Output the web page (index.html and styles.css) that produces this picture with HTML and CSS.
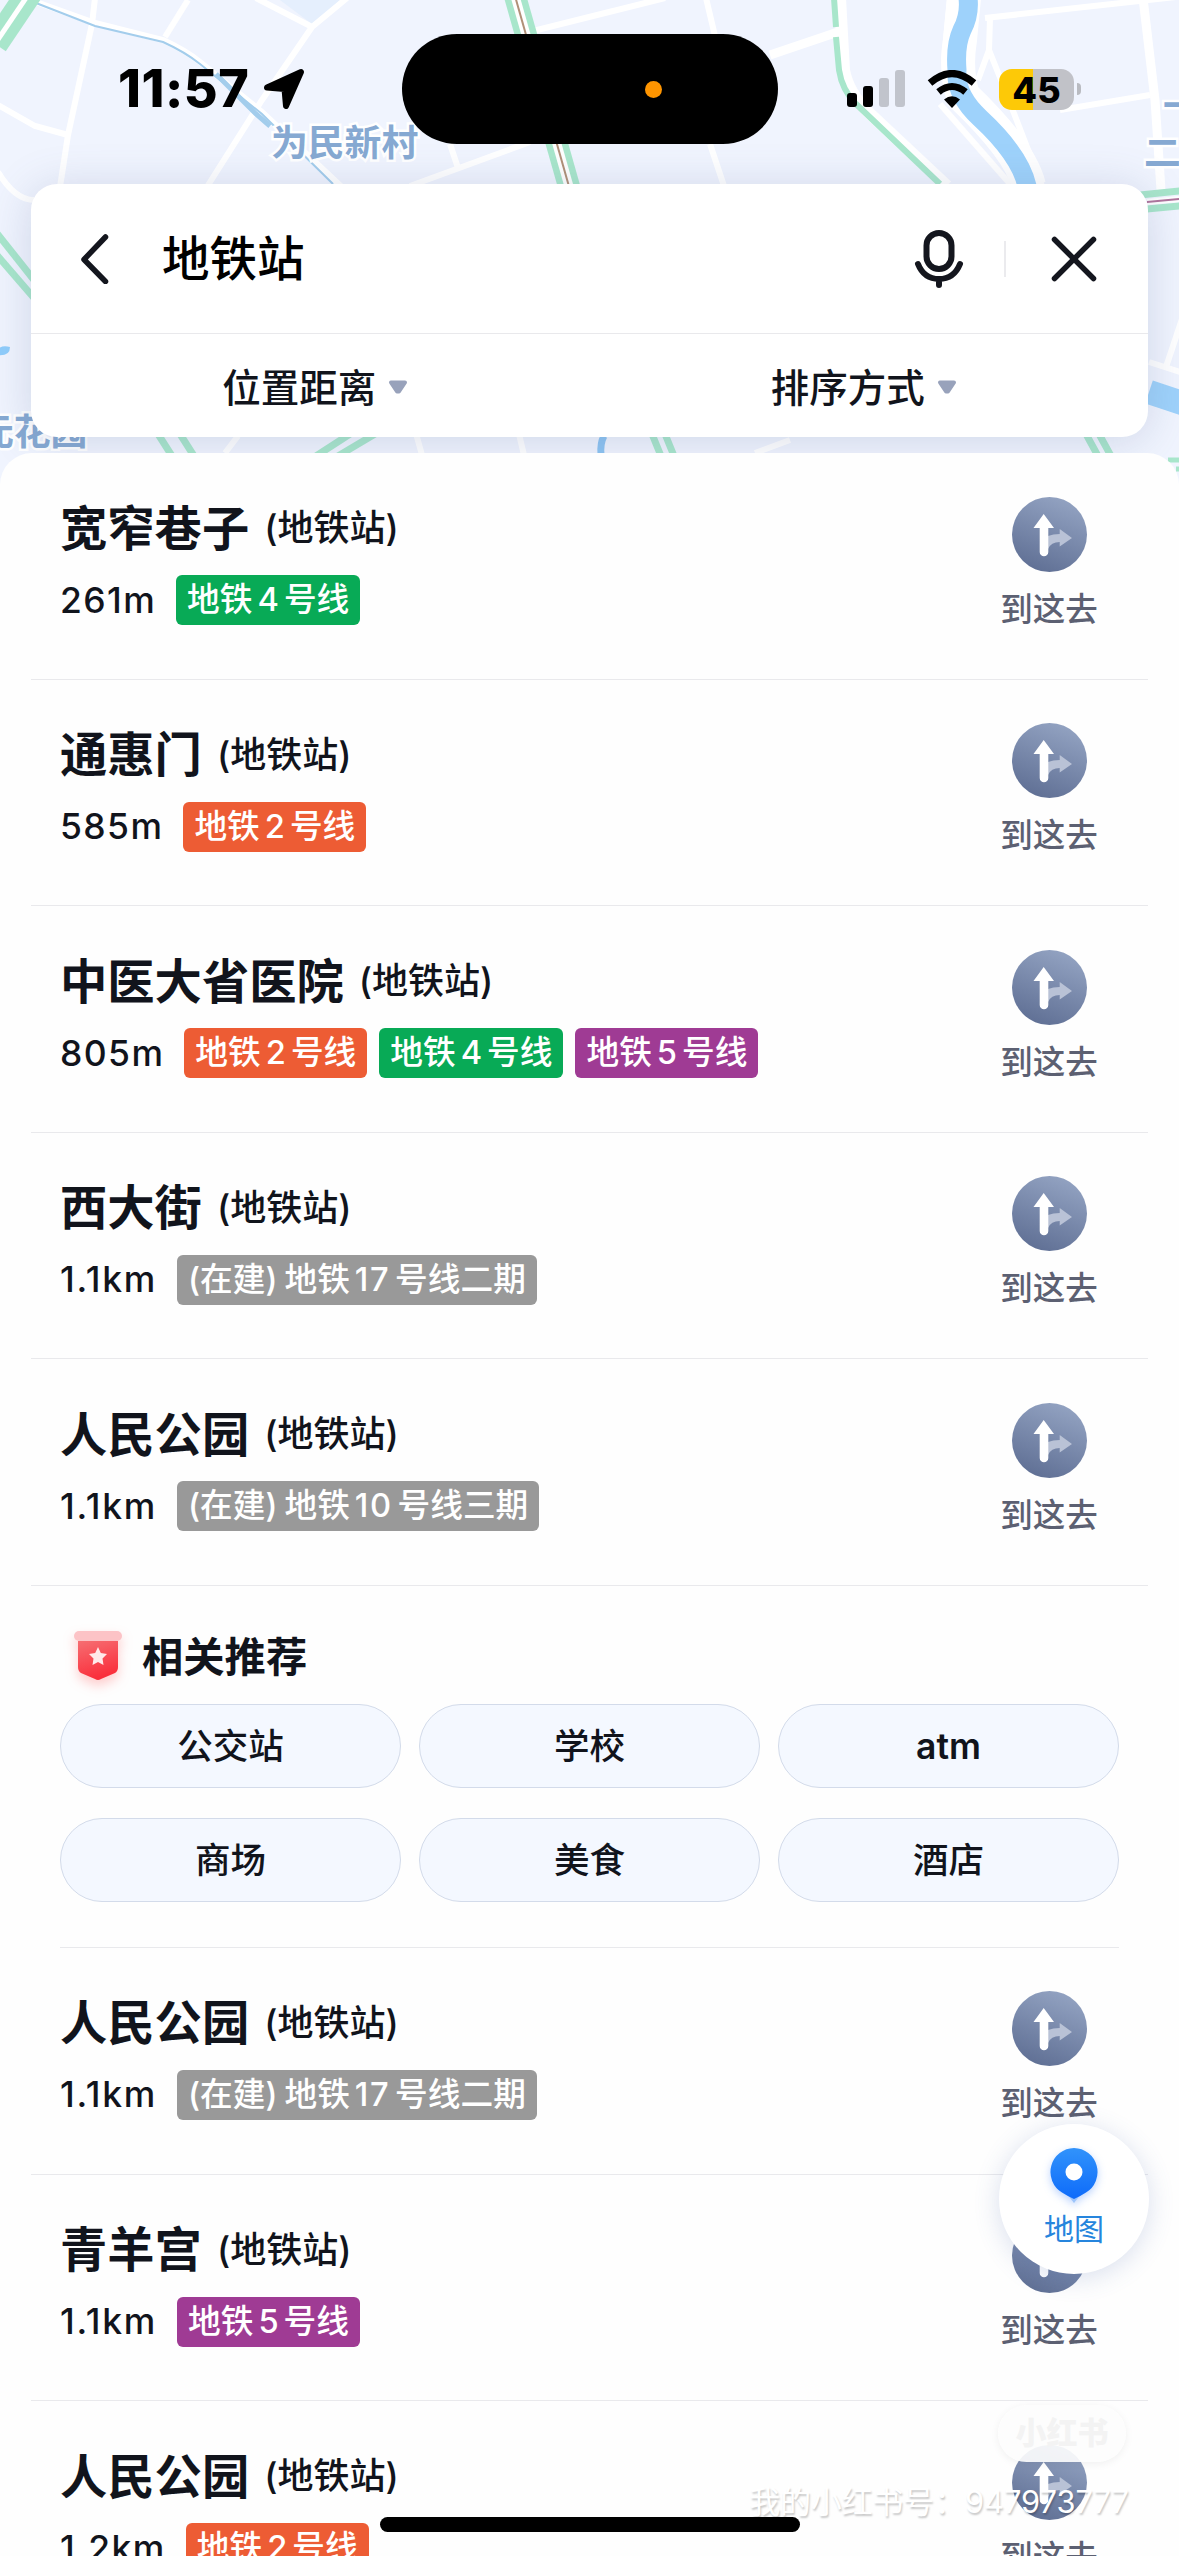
FILE: index.html
```html
<!DOCTYPE html>
<html lang="zh-CN">
<head>
    <meta charset="UTF-8">
    <meta name="viewport" content="width=device-width, initial-scale=1.0">
    <title>地铁站</title>
    <link rel="stylesheet" href="styles.css">
</head>
<body>
    <!-- Shared icons -->
    <svg class="defs" width="0" height="0">
        <defs>
            <linearGradient id="go-bg" x1="0.7" y1="0" x2="0.3" y2="1">
                <stop offset="0" stop-color="#93a3c2"/>
                <stop offset="1" stop-color="#5f6f94"/>
            </linearGradient>
            <linearGradient id="badge-bg" x1="0" y1="0" x2="0.3" y2="1">
                <stop offset="0" stop-color="#f66e72"/>
                <stop offset="1" stop-color="#fa2f3c"/>
            </linearGradient>
            <linearGradient id="pin-bg" x1="0" y1="0" x2="0" y2="1">
                <stop offset="0" stop-color="#3193fb"/>
                <stop offset="1" stop-color="#0e6bfa"/>
            </linearGradient>
        </defs>
        <symbol id="go" viewBox="0 0 75 75">
            <circle cx="37.5" cy="37.5" r="37.5" fill="url(#go-bg)"/>
            <path d="M36 39Q41 37 47.700 37V32L60 41L47.700 49.500V45Q39 45 36 52Z" fill="#b9c2d6"/>
            <path d="M31.700 17L42 31H36.300V55A4.300 4.300 0 0 1 27.700 55V31H21.500Z" fill="#fff"/>
        </symbol>
    </svg>

    <div class="phone">
        <svg class="map" viewBox="0 0 1179 500" width="1179" height="500">
            <rect width="1179" height="500" fill="#f0f4fe"/>
            <path d="M280 0L312 24L345 0Z" fill="#e5effd"/>
            <g fill="none" stroke="#fff" stroke-width="6">
                <path d="M95 -2L92 24L68 135L58 200"/>
                <path d="M36 2L95 23L163 40Q185 50 200 62L262 112L345 190"/>
                <path d="M188 0L165 37"/>
                <path d="M256 -2L312 27L347 -2M312 27L262 100L205 190"/>
                <path d="M-2 105L35 126L68 135"/>
                <path d="M-2 172Q15 200 34 200"/>
                <path d="M410 186L530 142"/>
                <path d="M533 31L665 -2"/>
                <path d="M706 -2L715 36M710 144L724 186M450 144L458 168"/>
                <path d="M770 55L838 32" stroke-width="9"/>
                <path d="M950 -2L944 60M940 104L1010 184"/>
                <path d="M985 18L1185 -4M990 18L989 50L978 80M989 50L1005 90L1042 186"/>
                <path d="M1060 110L1150 95"/>
                <path d="M1143 -2L1155 100L1161 190" stroke-width="9"/>
                <path d="M1185 310L1165 370M1149 362L1180 372"/>
                <path d="M415 430L422 455M518 430L524 455M225 453L238 436M755 453L790 440"/>
            </g>
            <g fill="none" stroke="#a3cdec" stroke-width="2">
                <path d="M36 3L95 26L163 42Q185 52 200 64L262 114L333 184"/>
                <path d="M216 74L256 114L270 126" stroke-width="5"/>
            </g>
            <g fill="none" stroke="#fff" stroke-width="34">
                <path d="M964 -2L960 40Q955 70 963 96Q1020 150 1029 186"/>
            </g>
            <path d="M968 -2Q970 15 962 30Q955 45 957 70Q955 95 980 118Q1020 155 1027 186" fill="none" stroke="#9ed2fb" stroke-width="19"/>
            <path d="M1149 392L1185 404" stroke="#9ed2fb" stroke-width="24"/>
            <path d="M-4 352Q0 344 10 347Q10 357 -4 355Z" fill="#8fcdfb"/>
            <path d="M604 436Q600 443 601 455" stroke="#8dc4f2" stroke-width="7" fill="none"/>
            <path d="M840 -2L844 70Q848 92 868 112L947 186" fill="none" stroke="#fff" stroke-width="12"/>
            <g fill="none" stroke="#a8e6cb" stroke-width="7">
                <path d="M834 -2L836 27M836 37L839 70Q842 90 856 104L940 184" stroke-width="6"/>
                <path d="M-5 44L30 -8" stroke-width="26"/>
                <path d="M515 -4L570 190" stroke-width="22"/>
                <path d="M-4 232L34 280M-4 254L34 298"/>
                <path d="M1140 195L1180 191M1147 209L1180 206"/>
                <path d="M158 434L172 456M180 434L194 456M316 456L350 434M338 456L375 434"/>
                <path d="M652 434L661 456M665 434L674 456M1086 434L1098 456M1099 434L1111 456"/>
                <path d="M1168 460H1180M1176 469H1180" stroke-width="5"/>
            </g>
            <path d="M-5 44L30 -8" stroke="#fff" stroke-width="5"/>
            <path d="M515 -4L570 190" stroke="#fff" stroke-width="9"/>
            <path d="M515 -4L570 190" stroke="#b09078" stroke-width="2"/>
            <path d="M1147 202L1180 199" stroke="#fff" stroke-width="6"/>
            <path d="M1147 202L1180 199" stroke="#b0749c" stroke-width="2"/>
            <g class="map-label">
                <text x="271" y="156">为民新村</text>
                <text x="-23" y="445">元花园</text>
                <text x="1144" y="166">二</text>
                <text x="1163" y="119">一</text>
            </g>
        </svg>

        <div class="status-bar">
            <div class="status-left">
                <span class="time">11:57</span>
                <svg width="42" height="42" viewBox="0 0 42 42">
                    <path d="M38 4L23 38L21.500 21L4 19.500Z" stroke="#000" stroke-width="6" stroke-linejoin="round"/>
                </svg>
            </div>
            <div class="island"><span class="island-dot"></span></div>
            <div class="status-right">
                <svg width="58" height="38" viewBox="0 0 58 38">
                    <rect x="0" y="23" width="10" height="14" rx="3"/>
                    <rect x="16" y="16" width="10" height="21" rx="3"/>
                    <rect x="32" y="8" width="10" height="29" rx="3" fill="#c1c4cc"/>
                    <rect x="48" y="0" width="10" height="37" rx="3" fill="#c1c4cc"/>
                </svg>
                <svg class="wifi" width="50" height="38" viewBox="0 0 50 38">
                    <path d="M3 13Q25 -6 47 13M11.500 22Q25 11 38.500 22" fill="none" stroke="#000" stroke-width="7"/>
                    <path d="M17 29.500Q25 23 33 29.500L25 38Z"/>
                </svg>
                <div class="battery">45</div>
                <span class="battery-cap"></span>
            </div>
        </div>

        <div class="search-card">
            <div class="search-row">
                <svg width="30" height="50" viewBox="0 0 30 50">
                    <path d="M24.500 3L3 25.500L24.500 47.500" fill="none" stroke="#14161e" stroke-width="5.500" stroke-linecap="round" stroke-linejoin="round"/>
                </svg>
                <span class="query">地铁站</span>
                <svg class="mic" width="50" height="60" viewBox="0 0 50 60" fill="none" stroke="#14161e" stroke-width="6" stroke-linecap="round">
                    <rect x="12.500" y="4" width="25" height="36" rx="12.500"/>
                    <path d="M4 35Q10 50 25 50Q40 50 46 35M25 50V56"/>
                </svg>
                <span class="search-split"></span>
                <svg width="46" height="46" viewBox="0 0 46 46">
                    <path d="M3.500 3.500L42.500 42.500M42.500 3.500L3.500 42.500" stroke="#14161e" stroke-width="5.500" stroke-linecap="round"/>
                </svg>
            </div>
            <div class="filters">
                <div class="filter">位置距离
                    <svg width="20" height="14" viewBox="0 0 20 14"><path d="M3 2.500H17L11 11.500H9Z" fill="#98a2bb" stroke="#98a2bb" stroke-width="4" stroke-linejoin="round"/></svg>
                </div>
                <div class="filter">排序方式
                    <svg width="20" height="14" viewBox="0 0 20 14"><path d="M3 2.500H17L11 11.500H9Z" fill="#98a2bb" stroke="#98a2bb" stroke-width="4" stroke-linejoin="round"/></svg>
                </div>
            </div>
        </div>

        <div class="sheet">
            <div class="station">
                <div class="info">
                    <div class="name">宽窄巷子<span class="type">(地铁站)</span></div>
                    <div class="meta"><span class="distance">261m</span><span class="line green">地铁<i>4</i>号线</span></div>
                </div>
                <div class="go"><svg width="75" height="75"><use href="#go"/></svg><span>到这去</span></div>
            </div>
            <div class="station">
                <div class="info">
                    <div class="name">通惠门<span class="type">(地铁站)</span></div>
                    <div class="meta"><span class="distance">585m</span><span class="line orange">地铁<i>2</i>号线</span></div>
                </div>
                <div class="go"><svg width="75" height="75"><use href="#go"/></svg><span>到这去</span></div>
            </div>
            <div class="station">
                <div class="info">
                    <div class="name">中医大省医院<span class="type">(地铁站)</span></div>
                    <div class="meta"><span class="distance">805m</span><span class="line orange">地铁<i>2</i>号线</span><span class="line green">地铁<i>4</i>号线</span><span class="line purple">地铁<i>5</i>号线</span></div>
                </div>
                <div class="go"><svg width="75" height="75"><use href="#go"/></svg><span>到这去</span></div>
            </div>
            <div class="station">
                <div class="info">
                    <div class="name">西大街<span class="type">(地铁站)</span></div>
                    <div class="meta"><span class="distance km">1.1km</span><span class="line gray">(在建)<b></b>地铁<i>17</i>号线二期</span></div>
                </div>
                <div class="go"><svg width="75" height="75"><use href="#go"/></svg><span>到这去</span></div>
            </div>
            <div class="station">
                <div class="info">
                    <div class="name">人民公园<span class="type">(地铁站)</span></div>
                    <div class="meta"><span class="distance km">1.1km</span><span class="line gray">(在建)<b></b>地铁<i>10</i>号线三期</span></div>
                </div>
                <div class="go"><svg width="75" height="75"><use href="#go"/></svg><span>到这去</span></div>
            </div>

            <div class="related">
                <div class="related-title">
                    <svg width="50" height="58" viewBox="0 0 50 58">
                        <rect x="1" y="1" width="48" height="10" rx="5" fill="#fcc3c6"/>
                        <path d="M5 11H45V37Q45 41 42 43L28 49Q25 51 22 49L8 43Q5 41 5 37Z" fill="url(#badge-bg)"/>
                        <path d="M25 17L27.800 23L34 24L29.500 28.500L30.500 35L25 32L19.500 35L20.500 28.500L16 24L22.200 23Z" fill="#ffeaea"/>
                    </svg>
                    <span>相关推荐</span>
                </div>
                <div class="chips">
                    <span class="chip">公交站</span>
                    <span class="chip">学校</span>
                    <span class="chip latin">atm</span>
                    <span class="chip">商场</span>
                    <span class="chip">美食</span>
                    <span class="chip">酒店</span>
                </div>
            </div>

            <div class="station">
                <div class="info">
                    <div class="name">人民公园<span class="type">(地铁站)</span></div>
                    <div class="meta"><span class="distance km">1.1km</span><span class="line gray">(在建)<b></b>地铁<i>17</i>号线二期</span></div>
                </div>
                <div class="go"><svg width="75" height="75"><use href="#go"/></svg><span>到这去</span></div>
            </div>
            <div class="station">
                <div class="info">
                    <div class="name">青羊宫<span class="type">(地铁站)</span></div>
                    <div class="meta"><span class="distance km">1.1km</span><span class="line purple">地铁<i>5</i>号线</span></div>
                </div>
                <div class="go"><svg width="75" height="75"><use href="#go"/></svg><span>到这去</span></div>
            </div>
            <div class="station">
                <div class="info">
                    <div class="name">人民公园<span class="type">(地铁站)</span></div>
                    <div class="meta"><span class="distance">1.2km</span><span class="line orange">地铁<i>2</i>号线</span></div>
                </div>
                <div class="go"><svg width="75" height="75"><use href="#go"/></svg><span>到这去</span></div>
            </div>
        </div>

        <!-- Floating layers over the list -->
        <div class="map-button">
            <svg width="50" height="58" viewBox="0 0 50 58">
                <path d="M14 42L25 56L36 42Z" fill="#9cc4fb"/>
                <path d="M25 1A24 24 0 0 1 37 45.500Q30 50 25 52Q20 50 13 45.500A24 24 0 0 1 25 1Z" fill="url(#pin-bg)"/>
                <circle cx="25" cy="25" r="8.500" fill="#fff"/>
            </svg>
            <span>地图</span>
        </div>
        <div class="watermark-pill">小红书</div>
        <div class="watermark-id">我的小红书号：947973777</div>
        <div class="home-indicator"></div>
    </div>
</body>
</html>
```

FILE: styles.css
```css
body, html {
    margin: 0;
    padding: 0;
    background: #fff;
    overflow: hidden;
}

body {
    font-family: "Inter", "Noto Sans CJK SC", sans-serif;
    font-weight: 500;
    color: #11141c;
}

svg {
    display: block;
    flex: none;
}

.defs {
    position: absolute;
}

.phone {
    position: relative;
    width: 1179px;
    height: 2556px;
    overflow: hidden;
}

.map {
    position: absolute;
    top: 0;
    left: 0;
}

.map-label {
    font-size: 36.8px;
    font-weight: 700;
    fill: #86a9d2;
    stroke: #fff;
    stroke-width: 5px;
    paint-order: stroke;
}

/* Status bar */
.status-bar {
    position: relative;
    display: flex;
    height: 184px;
    box-sizing: border-box;
    padding: 34px 98px 40px 118px;
    align-items: center;
    color: #000;
}

.status-left {
    display: flex;
    width: 284px;
    gap: 13px;
    align-items: center;
}

.time {
    width: 132px;
    font-size: 52px;
    font-weight: 800;
    line-height: 60px;
    letter-spacing: 0.5px;
    white-space: nowrap;
}

.island {
    display: flex;
    width: 376px;
    height: 110px;
    box-sizing: border-box;
    padding-right: 116px;
    border-radius: 55px;
    background: #000;
    align-items: center;
    justify-content: flex-end;
}

.island-dot {
    width: 17px;
    height: 17px;
    border-radius: 50%;
    background: #ff9500;
}

.status-right {
    display: flex;
    flex: 1;
    justify-content: flex-end;
    align-items: center;
}

.wifi {
    margin: 0 22px;
}

.battery {
    width: 75px;
    height: 41px;
    border-radius: 13px;
    background: linear-gradient(to right, #fdc907 46%, #c1c2c8 46%);
    font-size: 36px;
    font-weight: 800;
    line-height: 42px;
    text-align: center;
}

.battery-cap {
    width: 4px;
    height: 12px;
    margin-left: 3px;
    border-radius: 0 5px 5px 0;
    background: #b9bbc1;
}

/* Search card */
.search-card {
    position: relative;
    height: 253px;
    margin: 0 31px;
    border-radius: 26px;
    background: #fff;
    box-shadow: 0 4px 44px rgba(85, 105, 150, 0.22);
}

.search-row {
    display: flex;
    height: 150px;
    padding: 0 51px 0 50px;
    border-bottom: 1.5px solid #e9e9ec;
    box-sizing: border-box;
    align-items: center;
}

.query {
    flex: 1;
    margin-left: 51px;
    padding-top: 1px;
    font-size: 47.5px;
    line-height: 60px;
    color: #000;
}

.search-split {
    width: 2px;
    height: 36px;
    margin: 0 45px 0 40px;
    background: #ebebee;
}

.filters {
    display: flex;
    height: 102px;
    padding: 0 10px 1px;
    box-sizing: border-box;
}

.filter {
    display: flex;
    flex: 1;
    gap: 12px;
    align-items: center;
    justify-content: center;
    font-size: 38.5px;
}

.filter svg {
    margin-top: 4px;
}

/* Result list */
.sheet {
    position: relative;
    margin-top: 16px;
    border-radius: 32px 32px 0 0;
    background: #fefefe;
}

.station {
    display: flex;
    height: 226.6px;
    margin: 0 31px;
    padding: 0 50px 0 29px;
    box-sizing: border-box;
    border-bottom: 1.5px solid #e9e9ec;
    justify-content: space-between;
}

.info {
    padding-top: 44px;
}

.name {
    display: flex;
    height: 56px;
    align-items: center;
    font-size: 47.3px;
    font-weight: 700;
    white-space: nowrap;
}

.type {
    margin-left: 15px;
    font-size: 36px;
    font-weight: 500;
}

.meta {
    display: flex;
    height: 50px;
    margin-top: 22px;
    gap: 12px;
    align-items: center;
}

.distance {
    margin-right: 8px;
    font-size: 35.5px;
    letter-spacing: 1.4px;
    white-space: nowrap;
}

.km {
    letter-spacing: 1.7px;
}

.line {
    height: 50px;
    padding: 0 11px;
    border-radius: 6px;
    font-size: 32.7px;
    line-height: 49px;
    color: #fff;
    white-space: nowrap;
}

.line i {
    margin: 0 5px;
    font-style: normal;
}

.line b {
    margin-left: 7px;
}

.green { background: #08aa56; }
.orange { background: #ed5c34; }
.purple { background: #9f3b94; }
.gray { background: #999; }

.gray i {
    letter-spacing: 1.5px;
}

.go {
    display: flex;
    width: 98px;
    padding-top: 43.5px;
    flex-direction: column;
    align-items: center;
    gap: 14px;
    font-size: 32.5px;
    line-height: 48px;
    color: #5c6072;
    white-space: nowrap;
}

/* Related searches */
.related {
    height: 362px;
    margin: 0 60px;
    padding-top: 44px;
    box-sizing: border-box;
    border-bottom: 1.5px solid #e9e9ec;
}

.related-title {
    display: flex;
    height: 58px;
    padding-left: 13px;
    gap: 19px;
    font-size: 41.3px;
    font-weight: 700;
    line-height: 54px;
}

.related-title svg {
    filter: drop-shadow(0 6px 6px rgba(255, 90, 90, 0.3));
}

.chips {
    display: grid;
    grid-template-columns: repeat(3, 1fr);
    gap: 30px 18px;
    margin-top: 16px;
}

.chip {
    height: 84px;
    box-sizing: border-box;
    border: 1.5px solid #d3dbea;
    border-radius: 42px;
    background: #f4f8ff;
    font-size: 35.5px;
    line-height: 83px;
    text-align: center;
}

.latin {
    font-weight: 600;
}

/* Floating layers */
.map-button {
    position: absolute;
    top: 2124px;
    left: 999px;
    display: flex;
    width: 150px;
    height: 150px;
    padding-top: 23px;
    box-sizing: border-box;
    border-radius: 50%;
    background: #fff;
    box-shadow: 0 4px 26px rgba(70, 100, 170, 0.2);
    flex-direction: column;
    align-items: center;
    font-size: 30px;
    font-weight: 400;
    line-height: 44px;
    color: #2685dd;
}

.map-button svg {
    filter: drop-shadow(0 3px 4px rgba(30, 110, 250, 0.3));
}

.map-button span {
    margin-top: 2px;
}

.watermark-pill {
    position: absolute;
    top: 2405px;
    left: 998px;
    width: 128px;
    height: 57px;
    border-radius: 29px;
    background: rgba(253, 253, 253, 0.9);
    box-shadow: 0 2px 8px rgba(0, 0, 0, 0.06);
    font-size: 31px;
    font-weight: 900;
    line-height: 56px;
    text-align: center;
    color: #f3f3f3;
}

.watermark-id {
    position: absolute;
    top: 2480px;
    right: 50px;
    font-size: 30.8px;
    font-weight: 400;
    line-height: 44px;
    color: #fff;
    text-shadow: 1px 2px 2px rgba(0, 0, 0, 0.22);
    white-space: nowrap;
}

.home-indicator {
    position: absolute;
    top: 2517px;
    left: 380px;
    width: 420px;
    height: 15px;
    border-radius: 8px;
    background: #000;
}
```
